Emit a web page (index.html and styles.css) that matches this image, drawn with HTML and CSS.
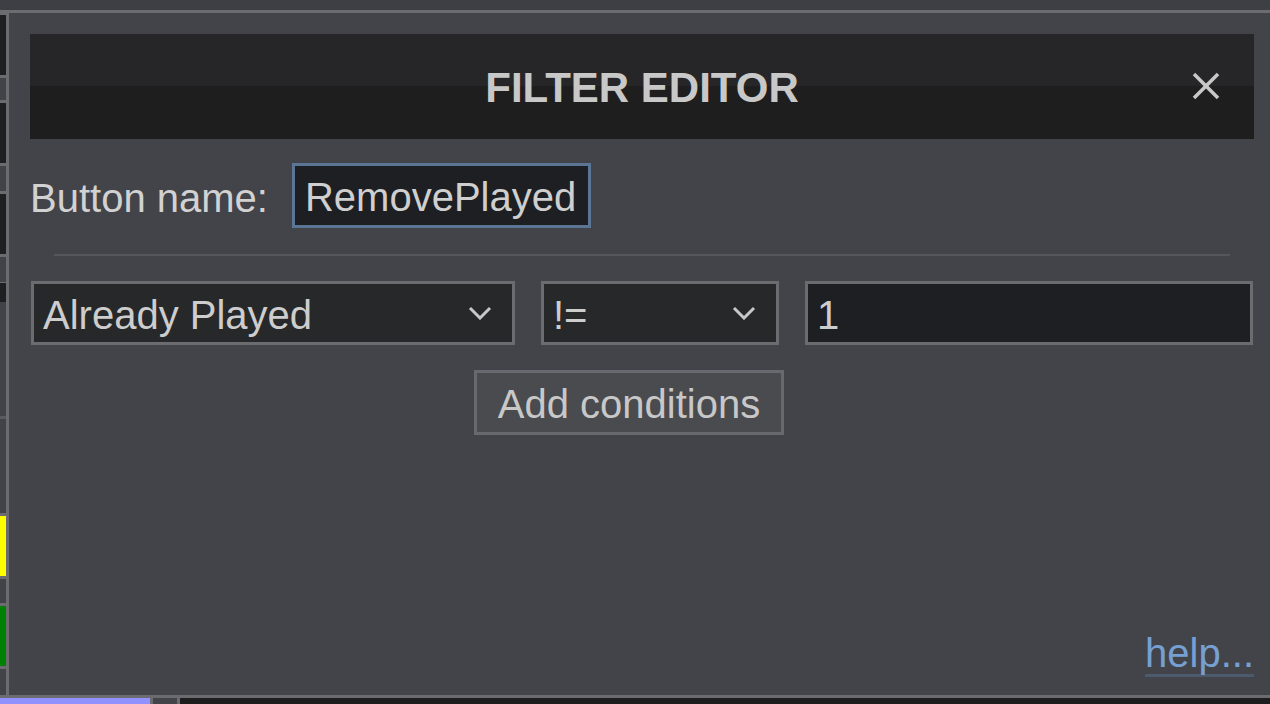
FILE: index.html
```html
<!DOCTYPE html>
<html lang="en">
<head>
<meta charset="utf-8">
<title>Filter Editor</title>
<link rel="stylesheet" href="styles.css">
</head>
<body>
    <div class="app">
        <div class="workspace">
            <!-- track list behind the dialog, only its left edge shows -->
            <div class="side">
                <div class="gap g-top"></div>
                <div class="row r-first"></div>
                <div class="gap g-22"></div>
                <div class="row"></div>
                <div class="gap g-25"></div>
                <div class="row"></div>
                <div class="gap g-25"></div>
                <div class="row r-short"></div>
                <div class="gap g-114"></div>
                <div class="line"></div>
                <div class="gap g-94"></div>
                <div class="row r-yellow"></div>
                <div class="gap g-24"></div>
                <div class="row r-green"></div>
                <div class="gap g-fill"></div>
            </div>
            <div class="main"></div>
        </div>
        <div class="statusbar">
            <div class="seg seg-a"></div>
            <div class="seg seg-b"></div>
            <div class="seg seg-c"></div>
        </div>
    </div>

    <div class="dialog">
        <div class="dialog-head">
            <h1 class="dialog-title">FILTER EDITOR</h1>
            <span class="dialog-close">
                <svg width="28" height="28" viewBox="0 0 28 28">
                    <line x1="2" y1="2" x2="26" y2="26" />
                    <line x1="26" y1="2" x2="2" y2="26" />
                </svg>
            </span>
        </div>

        <div class="name-row">
            <label class="name-label">Button name:</label>
            <div class="name-input">RemovePlayed</div>
        </div>

        <div class="divider"></div>

        <div class="cond-row">
            <div class="select">
                <span>Already Played</span>
                <svg class="chev" width="24" height="14" viewBox="0 0 24 14"><polyline points="2,2 12,12 22,2" /></svg>
            </div>
            <div class="select">
                <span>!=</span>
                <svg class="chev" width="24" height="14" viewBox="0 0 24 14"><polyline points="2,2 12,12 22,2" /></svg>
            </div>
            <div class="value">1</div>
        </div>

        <button class="add-btn">Add conditions</button>

        <a class="help" href="#">help...</a>
    </div>
</body>
</html>
```

FILE: styles.css
```css
html, body {
    margin: 0;
    height: 704px;
    overflow: hidden;
}
body {
    font-family: "Liberation Sans", Arial, sans-serif;
    background-color: #3e3f44;
    color: #cfcfcf;
    position: relative;
}

/* app behind the dialog */
.app {
    display: flex;
    flex-direction: column;
    height: 704px;
}
.workspace {
    flex: 1;
    display: flex;
    padding-top: 10px;
}
.side {
    width: 6px;
    display: flex;
    flex-direction: column;
    border-top: 3px solid #6b6b70;
}
.side .gap {
    background-color: #424348;
}
.g-top { height: 0; }
.g-22 { height: 22px; }
.g-25 { height: 25px; }
.g-24 { height: 24px; }
.g-114 { height: 114px; }
.g-94 { height: 94px; }
.g-fill { flex: 1; }
.side .row {
    height: 60px;
    background-color: #1e1f22;
    border-top: 3px solid #6b6b70;
    border-bottom: 3px solid #6b6b70;
}
.side .r-first {
    border-top-width: 2px;
}
.side .r-short {
    height: 19px;
    border-top-width: 1px;
    border-bottom: 0;
}
.side .line {
    height: 3px;
    background-color: #5a5b60;
}
.side .r-yellow { background-color: #ffff00; }
.side .r-green { background-color: #008000; }
.main {
    flex: 1;
    background-color: #424348;
}
.statusbar {
    height: 6px;
    display: flex;
    gap: 3px;
    border-top: 3px solid #6b6b70;
    background-color: #6b6b70;
}
.seg-a { width: 150px; background-color: #9191ff; }
.seg-b { width: 24px; background-color: #434449; }
.seg-c { flex: 1; background-color: #1e1e1f; }

/* dialog */
.dialog {
    position: absolute;
    left: 6px;
    top: 10px;
    width: 1272px;
    height: 688px;
    box-sizing: border-box;
    border: 3px solid #6b6b70;
    background-color: #434449;
    padding: 21px 21px 18px;
    display: flex;
    flex-direction: column;
    align-items: stretch;
}
.dialog-head {
    position: relative;
    height: 105px;
    display: flex;
    align-items: center;
    justify-content: center;
    background: linear-gradient(#262628 50%, #1e1e1f 50%);
}
.dialog-title {
    margin: 0;
    padding-top: 2px;
    font-size: 42px;
    font-weight: bold;
    color: #c8c8c8;
}
.dialog-close {
    position: absolute;
    right: 34px;
    top: 38px;
    width: 28px;
    height: 28px;
}
.dialog-close svg {
    display: block;
}
.dialog-close line {
    stroke: #c8c8c8;
    stroke-width: 3.5;
}

.name-row {
    margin-top: 24px;
    display: flex;
    align-items: center;
    gap: 24px;
}
.name-label {
    font-size: 40px;
    color: #d2d2d2;
    padding-top: 5px;
}
.name-input {
    width: 299px;
    height: 65px;
    box-sizing: border-box;
    border: 3px solid #5b7595;
    background-color: #1e1f22;
    padding: 4px 10px 0;
    font-size: 40px;
    color: #cfcfcf;
    display: flex;
    align-items: center;
}

.divider {
    margin: 26px 24px 0;
    height: 2px;
    background-color: #55565b;
}

.cond-row {
    margin-top: 25px;
    padding: 0 1px;
    display: grid;
    grid-template-columns: 484px 238px 1fr;
    gap: 26px;
}
.select, .value {
    height: 64px;
    box-sizing: border-box;
    border: 3px solid #6b6b70;
    font-size: 40px;
    color: #cdcdcd;
    display: flex;
    align-items: center;
    padding: 4px 20px 0 9px;
}
.select {
    background-color: #27282a;
    justify-content: space-between;
}
.select .chev {
    margin-top: -4px;
}
.value {
    background-color: #1e1f22;
}
.chev polyline {
    fill: none;
    stroke: #c8c8c8;
    stroke-width: 3;
}

.add-btn {
    align-self: center;
    margin: 25px 26px 0 0;
    width: 310px;
    height: 65px;
    box-sizing: border-box;
    border: 3px solid #68696e;
    background-color: #4a4b4f;
    font-family: "Liberation Sans", Arial, sans-serif;
    font-size: 40px;
    color: #c8c8c8;
    padding: 4px 0 0;
    text-align: center;
}

.help {
    margin-top: auto;
    align-self: flex-end;
    font-size: 40px;
    line-height: 40px;
    color: #76a0d3;
    text-decoration: none;
    border-bottom: 3px solid #4b5a6c;
    padding: 2px 0 1px;
}
```
